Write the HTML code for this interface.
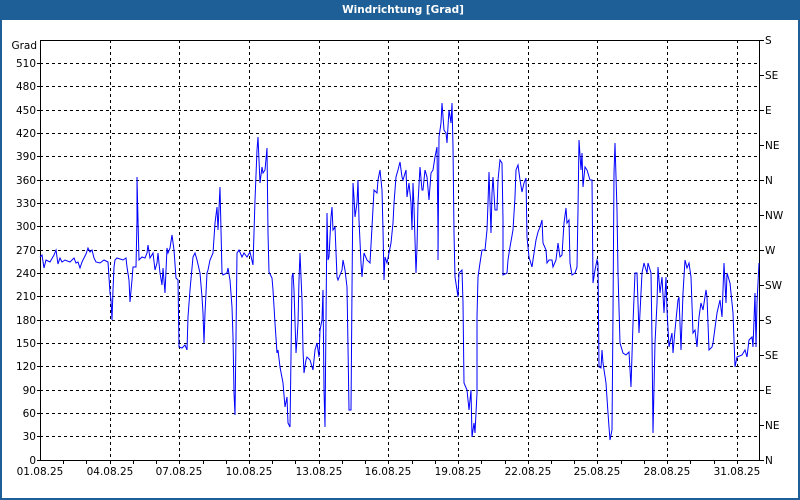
<!DOCTYPE html>
<html><head><meta charset="utf-8"><style>
html,body{margin:0;padding:0;width:800px;height:500px;overflow:hidden;background:#1f5f97}
svg{display:block}
</style></head><body>
<svg width="800" height="500" xmlns="http://www.w3.org/2000/svg" font-family="'DejaVu Sans','Liberation Sans',sans-serif" font-size="10.5">
<rect x="0" y="0" width="800" height="500" fill="#1f5f97"/>
<rect x="2" y="20" width="796" height="478" fill="#fff"/>
<text x="403" y="13" fill="#fff" font-weight="bold" font-size="10.5" text-anchor="middle">Windrichtung [Grad]</text>
<g stroke="#000" stroke-width="1" stroke-dasharray="3,3" shape-rendering="crispEdges">
<path d="M40 63.5H760M40 86.5H760M40 110.5H760M40 133.5H760M40 156.5H760M40 180.5H760M40 203.5H760M40 226.5H760M40 250.5H760M40 273.5H760M40 296.5H760M40 320.5H760M40 343.5H760M40 366.5H760M40 390.5H760M40 413.5H760M40 436.5H760"/>
<path d="M110.5 40V460M179.5 40V460M249.5 40V460M319.5 40V460M388.5 40V460M458.5 40V460M528.5 40V460M597.5 40V460M667.5 40V460M737.5 40V460"/>
</g>
<g stroke="#000" stroke-width="1" shape-rendering="crispEdges" fill="none">
<path d="M40.5 40V460.5H759.5V40M40 40.5H760"/>
<path d="M37 460.5H40M37 436.5H40M37 413.5H40M37 390.5H40M37 366.5H40M37 343.5H40M37 320.5H40M37 296.5H40M37 273.5H40M37 250.5H40M37 226.5H40M37 203.5H40M37 180.5H40M37 156.5H40M37 133.5H40M37 110.5H40M37 86.5H40M37 63.5H40"/>
<path d="M760 40.5H764M760 75.5H764M760 110.5H764M760 145.5H764M760 180.5H764M760 215.5H764M760 250.5H764M760 285.5H764M760 320.5H764M760 355.5H764M760 390.5H764M760 425.5H764M760 460.5H764"/>
<path d="M63.5 460V464M86.5 460V464M110.5 460V464M133.5 460V464M156.5 460V464M179.5 460V464M203.5 460V464M226.5 460V464M249.5 460V464M272.5 460V464M295.5 460V464M319.5 460V464M342.5 460V464M365.5 460V464M388.5 460V464M412.5 460V464M435.5 460V464M458.5 460V464M481.5 460V464M505.5 460V464M528.5 460V464M551.5 460V464M574.5 460V464M597.5 460V464M621.5 460V464M644.5 460V464M667.5 460V464M690.5 460V464M714.5 460V464M737.5 460V464"/>
</g>
<g fill="#000" text-anchor="end">
<text x="37" y="49">Grad</text>
<text x="36" y="67">510</text><text x="36" y="90">480</text><text x="36" y="114">450</text><text x="36" y="137">420</text><text x="36" y="160">390</text><text x="36" y="184">360</text><text x="36" y="207">330</text><text x="36" y="230">300</text><text x="36" y="254">270</text><text x="36" y="277">240</text><text x="36" y="300">210</text><text x="36" y="324">180</text><text x="36" y="347">150</text><text x="36" y="370">120</text><text x="36" y="394">90</text><text x="36" y="417">60</text><text x="36" y="440">30</text><text x="36" y="464">0</text>
</g>
<g fill="#000">
<text x="765" y="44">S</text><text x="765" y="79">SE</text><text x="765" y="114">E</text><text x="765" y="149">NE</text><text x="765" y="184">N</text><text x="765" y="219">NW</text><text x="765" y="254">W</text><text x="765" y="289">SW</text><text x="765" y="324">S</text><text x="765" y="359">SE</text><text x="765" y="394">E</text><text x="765" y="429">NE</text><text x="765" y="464">N</text>
</g>
<g fill="#000" text-anchor="middle">
<text x="40" y="475">01.08.25</text><text x="110" y="475">04.08.25</text><text x="179" y="475">07.08.25</text><text x="249" y="475">10.08.25</text><text x="319" y="475">13.08.25</text><text x="388" y="475">16.08.25</text><text x="458" y="475">19.08.25</text><text x="528" y="475">22.08.25</text><text x="597" y="475">25.08.25</text><text x="667" y="475">28.08.25</text><text x="737" y="475">31.08.25</text>
</g>
<polyline fill="none" stroke="#0000ff" stroke-width="1" points="40,257 42,255 44,268 46,260 50,262 54,255 56,250 58,264 60,258 62,262 65,260 70,262 74,258 76,263 78,262 80,268 82,262 84,258 86,254 88,248 90,252 92,250 94,258 96,262 100,263 104,260 108,262 110,293 111,300 112,320 113,290 114,267 115,260 117,258 123,260 126,258 127,267 129,280 130,302 132,280 133,267 136,267 137,220 137,177 138,220 139,260 142,257 145,258 147,253 148,245 150,258 153,253 155,270 157,263 158,253 160,273 162,285 163,268 165,293 167,248 168,253 170,248 172,235 174,250 176,278 178,280 179,347 182,348 185,345 187,350 188,317 190,290 193,257 195,253 197,260 200,273 202,297 203,313 204,343 205,313 207,273 208,270 210,260 213,253 215,223 217,207 218,230 220,187 222,273 223,275 227,273 228,268 230,280 232,307 233,337 234,393 235,415 236,337 237,253 239,250 242,257 244,253 247,257 250,252 253,265 255,200 257,150 258,137 260,183 262,167 263,173 265,170 267,148 268,233 269,272 272,278 273,290 275,323 277,353 278,350 280,367 283,383 285,407 287,397 288,423 290,427 291,357 292,277 293,273 294,290 296,353 297,340 298,323 299,280 300,253 302,300 303,350 304,373 306,360 307,357 310,360 313,370 315,350 317,343 319,357 320,330 322,320 323,290 324,390 325,427 326,320 327,213 328,260 329,257 331,217 332,207 333,230 335,227 337,277 338,280 340,275 342,270 343,260 345,270 347,287 348,347 349,410 351,410 352,290 353,183 354,197 355,217 357,203 358,180 359,220 361,263 362,277 364,253 367,260 370,263 372,227 374,190 377,193 378,180 380,170 382,190 383,230 384,280 385,257 387,263 389,253 391,243 393,223 394,203 396,177 398,170 400,162 402,177 403,180 406,170 407,197 409,183 411,203 412,230 413,183 414,207 416,273 417,247 418,203 420,167 422,190 423,190 425,170 427,177 429,200 431,173 433,170 435,157 437,147 438,233 438,260 439,137 441,123 442,103 444,130 446,133 447,143 449,110 451,123 452,103 453,147 454,233 455,277 457,290 458,297 459,273 462,270 463,303 464,383 467,390 469,410 471,390 472,437 474,423 475,433 477,393 477,317 478,277 480,263 482,250 485,250 487,230 488,203 489,172 491,233 492,193 493,177 495,210 497,210 498,180 500,160 502,163 503,220 503,275 507,273 508,260 510,247 513,230 515,197 516,170 518,165 520,180 522,192 524,183 526,178 527,237 529,257 532,267 533,260 536,240 538,232 540,227 542,220 543,243 546,250 547,263 549,260 552,260 553,267 556,260 558,243 560,257 562,255 564,223 566,208 567,223 569,220 570,263 572,275 575,273 577,267 578,210 579,140 581,170 582,153 583,187 585,167 587,170 590,180 592,180 593,283 595,270 597,260 598,263 599,367 601,368 602,350 603,363 606,383 608,413 609,427 610,440 612,430 613,313 614,173 615,143 617,210 618,273 620,343 623,353 626,355 629,352 631,387 633,323 635,273 637,273 639,333 642,273 644,263 647,273 648,263 651,273 652,340 653,433 655,343 657,303 658,267 660,293 662,277 664,313 666,277 667,310 669,347 672,333 673,353 675,330 678,300 679,297 681,350 683,293 685,260 687,268 689,263 691,277 693,333 695,330 697,347 699,317 701,303 703,310 706,290 707,297 709,350 712,347 713,343 717,313 720,300 722,317 724,263 726,303 727,273 730,283 733,313 735,367 737,357 742,355 745,350 747,357 749,340 752,337 753,347 755,293 756,347 757,303 759,263"/>
</svg>
</body></html>
